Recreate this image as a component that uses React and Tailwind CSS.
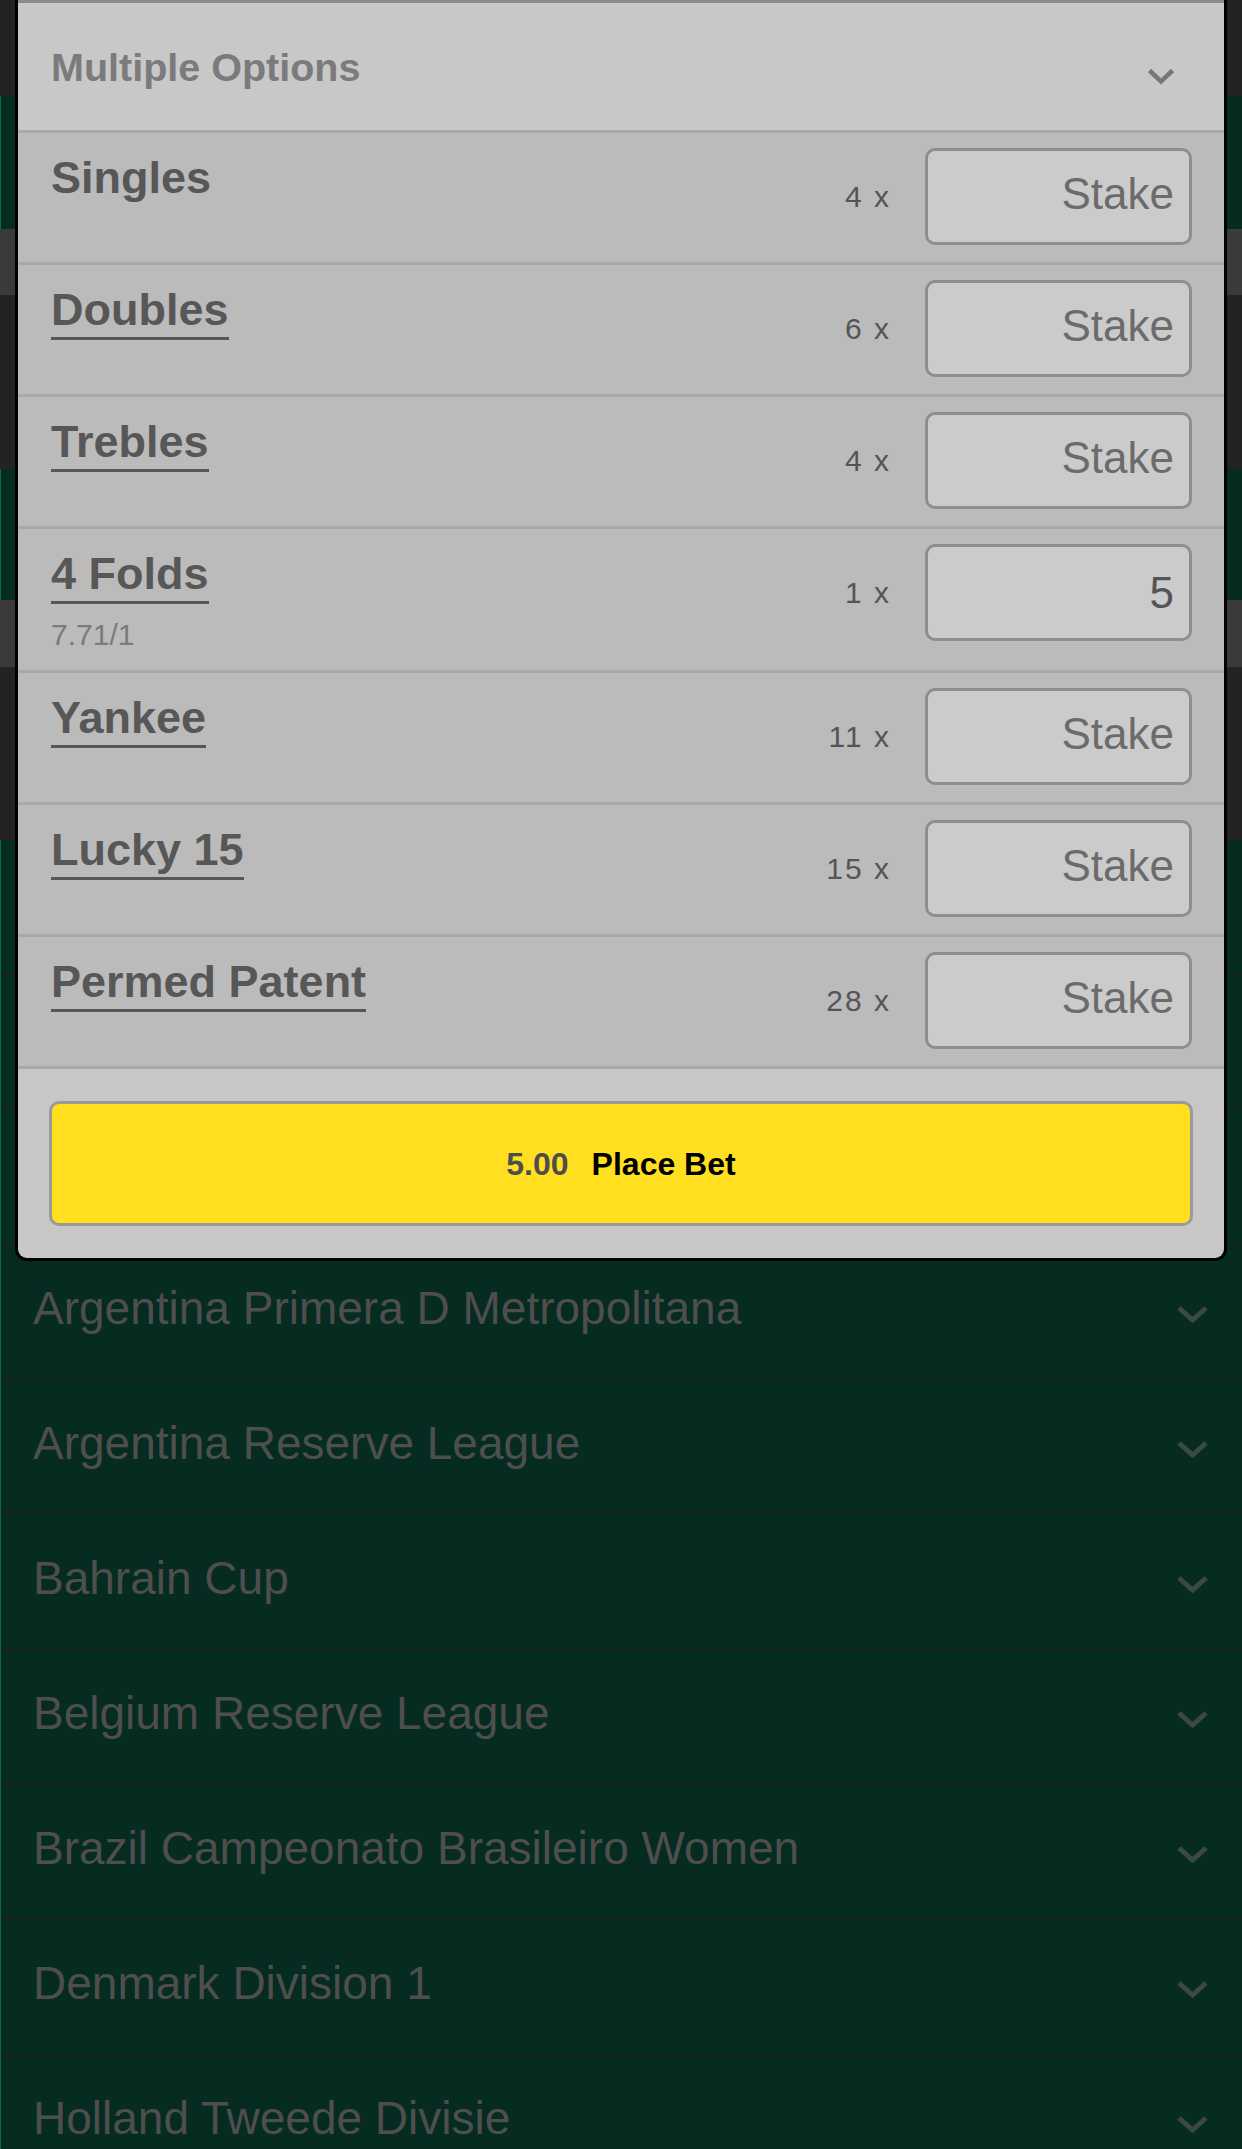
export default function App() {
  const bets = [
    { name: "Singles", count: "4 x", underline: false },
    { name: "Doubles", count: "6 x", underline: true },
    { name: "Trebles", count: "4 x", underline: true },
    { name: "4 Folds", count: "1 x", underline: true, odds: "7.71/1", value: "5" },
    { name: "Yankee", count: "11 x", underline: true },
    { name: "Lucky 15", count: "15 x", underline: true },
    { name: "Permed Patent", count: "28 x", underline: true },
  ];
  const leagues = [
    "",
    "",
    "",
    "Argentina Primera D Metropolitana",
    "Argentina Reserve League",
    "Bahrain Cup",
    "Belgium Reserve League",
    "Brazil Campeonato Brasileiro Women",
    "Denmark Division 1",
    "Holland Tweede Divisie",
  ];

  return (
    <div className="relative w-[1242px] h-[2149px] overflow-hidden bg-[#062b20] font-['Liberation_Sans',Arial,sans-serif]">
      {/* dimmed page behind the bet slip */}
      <div className="flex flex-col">
        <div className="h-[96px] bg-[#232323]" />
        <div className="h-[133px] bg-[#062b20] border-l border-l-[#0d6a47]" />
        <div className="h-[66px] bg-[#3a3a3a]" />
        <div className="h-[174px] bg-[#232323]" />
        <div className="h-[131px] bg-[#062b20] border-l border-l-[#0d6a47]" />
        <div className="h-[67px] bg-[#3a3a3a]" />
        <div className="h-[173px] bg-[#232323]" />
        <div className="flex flex-col border-l border-l-[#0d6a47]">
          {leagues.map((name, i) => (
            <div
              key={i}
              className="h-[135px] shrink-0 border-b-2 border-b-[#1c211e] flex items-center justify-between pl-[32px] pr-[33px] pb-[8px] bg-[#062b20]"
            >
              <span className="text-[46px] leading-[46px] text-[#4e4e4e] whitespace-nowrap">{name}</span>
              <svg width="33" height="18" viewBox="0 0 33 18" className="mt-[13px]">
                <polyline points="3,3 16.5,15 30,3" fill="none" stroke="#3c4843" strokeWidth="5" />
              </svg>
            </div>
          ))}
        </div>
      </div>

      {/* bet slip overlay */}
      <div className="absolute left-[15px] top-0 w-[1212px] border-x-[3px] border-b-[3px] border-black rounded-b-[12px] overflow-hidden">
        <div className="h-[133px] bg-[#c8c8c8] border-t-[3px] border-t-[#8c8c8c] border-b-[3px] border-b-[#a9a9a9] flex items-center justify-between pl-[33px] pr-[49px]">
          <span className="text-[39.5px] leading-[40px] font-bold text-[#7b7b7b]">Multiple Options</span>
          <svg width="28" height="17" viewBox="0 0 28 17" className="mt-[20px]">
            <polyline points="2.5,2.5 14,13.5 25.5,2.5" fill="none" stroke="#777777" strokeWidth="4.5" />
          </svg>
        </div>

        {bets.map((b) => (
          <div
            key={b.name}
            className={
              b.odds
                ? "h-[144px] flex items-start justify-between bg-[#bbbbbb] border-b-[3px] border-b-[#a9a9a9] pl-[33px] pr-[32px]"
                : "h-[132px] flex items-start justify-between bg-[#bbbbbb] border-b-[3px] border-b-[#a9a9a9] pl-[33px] pr-[32px]"
            }
          >
            <div className="pt-[23px] flex flex-col items-start">
              <span
                className={
                  b.underline
                    ? "text-[45px] leading-[44px] font-bold text-[#575757] pb-[5px] border-b-[3px] border-b-[#575757] whitespace-nowrap"
                    : "text-[45px] leading-[44px] font-bold text-[#575757] whitespace-nowrap"
                }
              >
                {b.name}
              </span>
              {b.odds && (
                <span className="mt-[16px] text-[30px] leading-[30px] text-[#7b7b7b]">{b.odds}</span>
              )}
            </div>
            <div className="pt-[15px] flex items-center gap-[34px]">
              <span className="text-[30px] leading-[30px] tracking-[2px] text-[#555555] whitespace-nowrap">{b.count}</span>
              {b.value ? (
                <div className="w-[267px] h-[97px] border-[3px] border-[#8e8e8e] rounded-[10px] bg-[#cbcbcb] flex items-center justify-end pr-[15px]">
                  <span className="text-[44px] leading-[44px] text-[#555555]">{b.value}</span>
                </div>
              ) : (
                <div className="w-[267px] h-[97px] border-[3px] border-[#8e8e8e] rounded-[10px] bg-[#cbcbcb] flex items-center justify-end pr-[15px] pb-[6px]">
                  <span className="text-[44px] leading-[44px] text-[#6b6b6b]">Stake</span>
                </div>
              )}
            </div>
          </div>
        ))}

        <div className="bg-[#c7c7c7] px-[31px] py-[32px]">
          <div className="h-[125px] bg-[#ffdf1f] border-[3px] border-[#9a9a9a] rounded-[10px] flex items-center justify-center gap-[23px] text-[32px] leading-[32px] font-bold">
            <span className="text-[#4d4d4d]">5.00</span>
            <span className="text-black">Place Bet</span>
          </div>
        </div>
      </div>
    </div>
  );
}
